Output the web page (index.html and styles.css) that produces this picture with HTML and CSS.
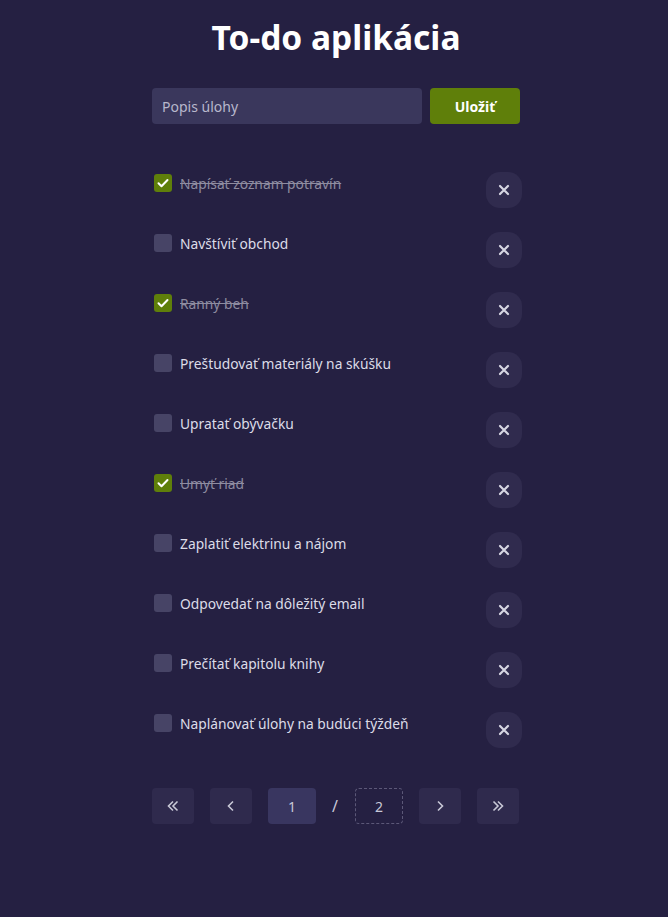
FILE: index.html
```html
<!DOCTYPE html>
<html lang="sk">
<head>
<meta charset="utf-8">
<title>To-do aplikácia</title>
<link rel="stylesheet" href="styles.css">
</head>
<body>
<main class="app">
  <h1 class="title">To-do aplikácia</h1>
  <form class="add-form">
    <input class="add-input" type="text" placeholder="Popis úlohy">
    <button class="add-btn" type="button">Uložiť</button>
  </form>
  <ul class="todo-list">
    <li class="todo done"><label class="todo-label"><span class="check"><svg viewBox="0 0 18 18" width="18" height="18"><path d="M4.5 9.3l3 3 6-6.3" fill="none" stroke="#fff" stroke-width="2" stroke-linecap="round" stroke-linejoin="round"/></svg></span><span class="todo-text">Napísať zoznam potravín</span></label><button class="del" type="button"><svg viewBox="0 0 12 12" width="12" height="12"><path d="M2 2l8 8M10 2l-8 8" stroke="#d6d6e2" stroke-width="2.2" stroke-linecap="round"/></svg></button></li>
    <li class="todo"><label class="todo-label"><span class="check"></span><span class="todo-text">Navštíviť obchod</span></label><button class="del" type="button"><svg viewBox="0 0 12 12" width="12" height="12"><path d="M2 2l8 8M10 2l-8 8" stroke="#d6d6e2" stroke-width="2.2" stroke-linecap="round"/></svg></button></li>
    <li class="todo done"><label class="todo-label"><span class="check"><svg viewBox="0 0 18 18" width="18" height="18"><path d="M4.5 9.3l3 3 6-6.3" fill="none" stroke="#fff" stroke-width="2" stroke-linecap="round" stroke-linejoin="round"/></svg></span><span class="todo-text">Ranný beh</span></label><button class="del" type="button"><svg viewBox="0 0 12 12" width="12" height="12"><path d="M2 2l8 8M10 2l-8 8" stroke="#d6d6e2" stroke-width="2.2" stroke-linecap="round"/></svg></button></li>
    <li class="todo"><label class="todo-label"><span class="check"></span><span class="todo-text">Preštudovať materiály na skúšku</span></label><button class="del" type="button"><svg viewBox="0 0 12 12" width="12" height="12"><path d="M2 2l8 8M10 2l-8 8" stroke="#d6d6e2" stroke-width="2.2" stroke-linecap="round"/></svg></button></li>
    <li class="todo"><label class="todo-label"><span class="check"></span><span class="todo-text">Upratať obývačku</span></label><button class="del" type="button"><svg viewBox="0 0 12 12" width="12" height="12"><path d="M2 2l8 8M10 2l-8 8" stroke="#d6d6e2" stroke-width="2.2" stroke-linecap="round"/></svg></button></li>
    <li class="todo done"><label class="todo-label"><span class="check"><svg viewBox="0 0 18 18" width="18" height="18"><path d="M4.5 9.3l3 3 6-6.3" fill="none" stroke="#fff" stroke-width="2" stroke-linecap="round" stroke-linejoin="round"/></svg></span><span class="todo-text">Umyť riad</span></label><button class="del" type="button"><svg viewBox="0 0 12 12" width="12" height="12"><path d="M2 2l8 8M10 2l-8 8" stroke="#d6d6e2" stroke-width="2.2" stroke-linecap="round"/></svg></button></li>
    <li class="todo"><label class="todo-label"><span class="check"></span><span class="todo-text">Zaplatiť elektrinu a nájom</span></label><button class="del" type="button"><svg viewBox="0 0 12 12" width="12" height="12"><path d="M2 2l8 8M10 2l-8 8" stroke="#d6d6e2" stroke-width="2.2" stroke-linecap="round"/></svg></button></li>
    <li class="todo"><label class="todo-label"><span class="check"></span><span class="todo-text">Odpovedať na dôležitý email</span></label><button class="del" type="button"><svg viewBox="0 0 12 12" width="12" height="12"><path d="M2 2l8 8M10 2l-8 8" stroke="#d6d6e2" stroke-width="2.2" stroke-linecap="round"/></svg></button></li>
    <li class="todo"><label class="todo-label"><span class="check"></span><span class="todo-text">Prečítať kapitolu knihy</span></label><button class="del" type="button"><svg viewBox="0 0 12 12" width="12" height="12"><path d="M2 2l8 8M10 2l-8 8" stroke="#d6d6e2" stroke-width="2.2" stroke-linecap="round"/></svg></button></li>
    <li class="todo"><label class="todo-label"><span class="check"></span><span class="todo-text">Naplánovať úlohy na budúci týždeň</span></label><button class="del" type="button"><svg viewBox="0 0 12 12" width="12" height="12"><path d="M2 2l8 8M10 2l-8 8" stroke="#d6d6e2" stroke-width="2.2" stroke-linecap="round"/></svg></button></li>
  </ul>
  <nav class="pager">
    <button class="pg-btn" type="button"><svg viewBox="0 0 16 16" width="16" height="16"><path d="M8 3.5L3.5 8 8 12.5M12.5 3.5L8 8l4.5 4.5" fill="none" stroke="#c8c8d6" stroke-width="1.6"/></svg></button>
    <button class="pg-btn" type="button"><svg viewBox="0 0 16 16" width="16" height="16"><path d="M10 3.5L5.5 8l4.5 4.5" fill="none" stroke="#c8c8d6" stroke-width="1.6"/></svg></button>
    <span class="pg-num current">1</span>
    <span class="pg-sep">/</span>
    <span class="pg-num total">2</span>
    <button class="pg-btn" type="button"><svg viewBox="0 0 16 16" width="16" height="16"><path d="M6 3.5l4.5 4.5L6 12.5" fill="none" stroke="#c8c8d6" stroke-width="1.6"/></svg></button>
    <button class="pg-btn" type="button"><svg viewBox="0 0 16 16" width="16" height="16"><path d="M3.5 3.5L8 8l-4.5 4.5M8 3.5l4.5 4.5L8 12.5" fill="none" stroke="#c8c8d6" stroke-width="1.6"/></svg></button>
  </nav>
</main>
</body>
</html>
```

FILE: styles.css
```css
* { box-sizing: border-box; }
html, body {
  margin: 0;
  padding: 0;
  background: #252042;
  font-family: "Noto Sans", "Open Sans", sans-serif;
  color: #dcdce8;
}
.app {
  width: 372px;
  margin: 0 auto;
  padding: 12px 0 0 4px;
  display: flex;
  flex-direction: column;
}
.title {
  margin: 0;
  text-align: center;
  font-size: 33.5px;
  font-weight: 700;
  line-height: 50px;
  color: #ffffff;
}
.add-form {
  margin-top: 26px;
  display: flex;
  gap: 8px;
  width: 368px;
}
.add-input {
  flex: 1;
  height: 36px;
  border: none;
  border-radius: 4px;
  background: #3a375c;
  padding: 0 10px;
  font-family: inherit;
  font-size: 14px;
  color: #e0e0ea;
  outline: none;
}
.add-input::placeholder { color: #b8b8cc; }
.add-btn {
  width: 90px;
  height: 36px;
  border: none;
  border-radius: 4px;
  background: #5f7f0a;
  color: #ffffff;
  font-family: inherit;
  font-weight: 700;
  font-size: 14px;
}
.todo-list {
  list-style: none;
  width: 370px;
  margin: 48px 0 0;
  padding: 0;
  display: flex;
  flex-direction: column;
  gap: 24px;
}
.todo {
  display: flex;
  justify-content: space-between;
  align-items: flex-start;
  height: 36px;
}
.todo-label {
  display: flex;
  align-items: flex-start;
  gap: 8px;
  margin-top: 2px;
  padding-left: 2px;
}
.check {
  width: 18px;
  height: 18px;
  border-radius: 3px;
  background: #474466;
  display: flex;
}
.done .check { background: #5f7f0a; }
.todo-text {
  font-size: 13.8px;
  line-height: 18px;
  padding-top: 1px;
  color: #dcdce8;
}
.done .todo-text {
  color: #8e8ca0;
  text-decoration: line-through;
}
.del {
  width: 36px;
  height: 36px;
  border: none;
  border-radius: 14px;
  background: #302b4e;
  display: flex;
  align-items: center;
  justify-content: center;
  padding: 0;
}
.pager {
  margin-top: 40px;
  display: flex;
  align-items: center;
  gap: 16px;
}
.pg-btn {
  width: 42px;
  height: 36px;
  border: none;
  border-radius: 4px;
  background: #2f2a4d;
  display: flex;
  align-items: center;
  justify-content: center;
  padding: 0;
}
.pg-num {
  width: 48px;
  height: 36px;
  border-radius: 4px;
  display: flex;
  align-items: center;
  justify-content: center;
  font-size: 14px;
  color: #c8c8d8;
}
.pg-num.current { background: #393660; }
.pg-num.total { border: 1px dashed #5c5878; }
.pg-sep {
  font-size: 16px;
  color: #c8c8d8;
  width: 7px;
}
```
